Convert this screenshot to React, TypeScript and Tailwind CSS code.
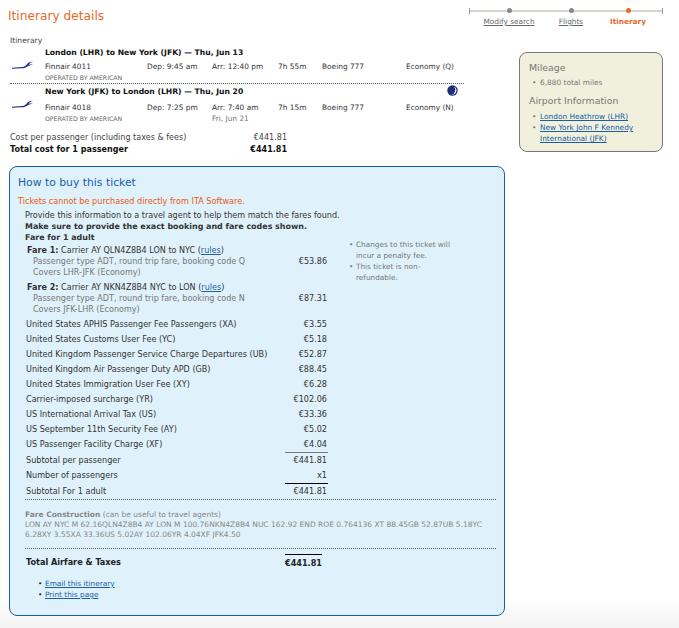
import React from "react";

const Plane = () => (
  <svg width="23" height="10" viewBox="0 0 24 10" className="block">
    <path d="M1 7.8 L12 7.2 C14 7 15 6.2 16.5 4.6 L18 2.6 L23 1.4 L19.4 3.4 L18.4 4.8 L23 4 L17.5 6.2 C15 7.8 13 8.4 11 8.5 L1 8.8 Z" fill="#1b2f7d" />
  </svg>
);

const Flight = ({ route, flight, dep, arr, arrNote, dur, cabin, badge, extra }: { route: string; flight: string; dep: string; arr: string; arrNote?: string; dur: string; cabin: string; badge?: boolean; extra?: boolean }) => (
  <div className="relative grid grid-cols-[35px_102px_65px_66px_44px_84px_1fr] text-[7.4px] leading-[11px] text-[#333]">
    <div className="row-span-3 col-start-1 pt-[13px] pl-[1px]"><Plane /></div>
    <div className="col-span-6 col-start-2 font-bold text-[7.65px] text-[#111] h-[14px]">{route}</div>
    <div className={extra ? "h-[13px] pt-[2px]" : "h-[11px]"}>{flight}</div>
    <div className={extra ? "h-[13px] pt-[2px]" : "h-[11px]"}>{dep}</div>
    <div className={extra ? "h-[13px] pt-[2px]" : "h-[11px]"}>{arr}</div>
    <div className={extra ? "h-[13px] pt-[2px]" : "h-[11px]"}>{dur}</div>
    <div className={extra ? "h-[13px] pt-[2px]" : "h-[11px]"}>Boeing 777</div>
    <div className={extra ? "h-[13px] pt-[2px]" : "h-[11px]"}>{cabin}</div>
    <div className="col-start-2 text-[6.2px] text-[#666] h-[11px]">OPERATED BY AMERICAN</div>
    <div className="col-start-4 col-span-2 text-[#777] h-[11px]">{arrNote}</div>
    {badge && (
      <svg width="11" height="11" viewBox="0 0 11 11" className="absolute right-[6px] -top-[1px]">
        <circle cx="5.5" cy="5.5" r="5.2" fill="#1b2f7d" />
        <path d="M7 1.6 A4.2 4.2 0 0 1 9.5 5.6 A4.2 4.2 0 0 1 4.6 9.6 A4.4 4.4 0 0 0 8 6.4 A4.6 4.6 0 0 0 7 1.6 Z" fill="#ffffff" />
      </svg>
    )}
  </div>
);

const Fee = ({ label, amount }: { label: string; amount: string }) => (
  <div className="flex h-[15px] items-center justify-between w-[301px] ml-[26px] text-[8.1px] whitespace-nowrap">
    <span>{label}</span>
    <span>{amount}</span>
  </div>
);

const fees = [
  ["United States APHIS Passenger Fee Passengers (XA)", "€3.55"],
  ["United States Customs User Fee (YC)", "€5.18"],
  ["United Kingdom Passenger Service Charge Departures (UB)", "€52.87"],
  ["United Kingdom Air Passenger Duty APD (GB)", "€88.45"],
  ["United States Immigration User Fee (XY)", "€6.28"],
  ["Carrier-imposed surcharge (YR)", "€102.06"],
  ["US International Arrival Tax (US)", "€33.36"],
  ["US September 11th Security Fee (AY)", "€5.02"],
  ["US Passenger Facility Charge (XF)", "€4.04"],
];

const Link = ({ children }: { children: React.ReactNode }) => (
  <a className="text-[#1a5ea8] underline">{children}</a>
);

const Step = ({ label, active, className }: { label: string; active?: boolean; className: string }) => (
  <div className={`absolute -top-[2px] flex flex-col items-center ${className}`}>
    <div className={`w-[5px] h-[5px] rounded-full ${active ? "bg-[#e8692e]" : "bg-[#888]"}`} />
    <span className={`mt-[4px] leading-[9px] whitespace-nowrap ${active ? "font-bold text-[#e8692e]" : "text-[#666] underline"}`}>{label}</span>
  </div>
);

const Fare = ({ n, text, amount, l1, l2, className }: { n: number; text: string; amount: string; l1: string; l2: string; className: string }) => (
  <div className={`ml-[26px] w-[301px] leading-[11px] ${className}`}>
    <div className="pl-[1px]"><b>Fare {n}:</b> {text} (<Link>rules</Link>)</div>
    <div className="flex justify-between text-[#777] pl-[7px]">
      <span>{l1}</span><span className="text-[#333]">{amount}</span>
    </div>
    <div className="text-[#777] pl-[7px]">{l2}</div>
  </div>
);

const dot = "relative before:content-['•'] before:absolute";

export default function App() {
  return (
    <div className="relative w-[679px] h-[628px] overflow-hidden bg-gradient-to-b from-white from-[95%] to-[#f3f3f3] font-['DejaVu_Sans',sans-serif] text-[8.05px] text-[#333]">
      <div className="flex justify-between items-start h-[34px]">
        <h1 className="text-[12.2px] leading-[17px] mt-[8px] ml-[8px] text-[#e8692e]">Itinerary details</h1>
        <div className="relative w-[194px] mt-[10px] mr-[16px] h-[2px] bg-[#d5d5cc] text-[7.35px]">
          <div className="absolute left-0 -top-[2px] w-px h-[6px] bg-[#999]" />
          <div className="absolute right-0 -top-[2px] w-px h-[6px] bg-[#999]" />
          <Step label="Modify search" className="left-[10px] w-[60px]" />
          <Step label="Flights" className="left-[82px] w-[40px]" />
          <Step label="Itinerary" active className="left-[134px] w-[50px]" />
        </div>
      </div>

      <div className="flex">
        <div className="w-[454px] ml-[10px]">
          <div className="leading-[11px] mt-[1px] h-[12px] text-[7.6px] text-[#444]">Itinerary</div>
          <Flight route="London (LHR) to New York (JFK) — Thu, Jun 13" flight="Finnair 4011" dep="Dep: 9:45 am" arr="Arr: 12:40 pm" dur="7h 55m" cabin="Economy (Q)" />
          <div className="border-b border-dotted border-[#555] mb-[2px]" />
          <Flight badge extra route="New York (JFK) to London (LHR) — Thu, Jun 20" flight="Finnair 4018" dep="Dep: 7:25 pm" arr="Arr: 7:40 am" arrNote="Fri, Jun 21" dur="7h 15m" cabin="Economy (N)" />
          <div className="flex mt-[7px] leading-[13px] w-[277px] justify-between text-[#444]"><span>Cost per passenger (including taxes &amp; fees)</span><span>€441.81</span></div>
          <div className="flex leading-[12px] w-[277px] justify-between font-bold text-[#111]"><span>Total cost for 1 passenger</span><span>€441.81</span></div>
        </div>
        <div className="w-[144px] h-[100px] ml-[55px] mt-[18px] rounded-[8px] border border-[#777] bg-[#f1f0dc] pl-[9px] pt-[8px] text-[#777] text-[7.4px]">
          <div className="text-[9.4px] leading-[13px]">Mileage</div>
          <ul className="mt-[3px] leading-[11px]"><li className={`${dot} pl-[11px] before:left-[3px]`}>6,880 total miles</li></ul>
          <div className="text-[9.4px] leading-[13px] mt-[6px]">Airport Information</div>
          <ul className="mt-[4px] leading-[11px]">
            <li className={`${dot} pl-[11px] before:left-[3px]`}><Link>London Heathrow (LHR)</Link></li>
            <li className={`${dot} pl-[11px] before:left-[3px]`}><Link>New York John F Kennedy International (JFK)</Link></li>
          </ul>
        </div>
      </div>

      <div className="ml-[9px] mt-[10px] w-[496px] h-[450px] rounded-[8px] border border-[#1a5ea8] bg-[#dff1fa] relative">
        <h2 className="text-[10.8px] leading-[14px] text-[#1a5ea8] mt-[9px] ml-[8px]">How to buy this ticket</h2>
        <p className="text-[#ea5a10] text-[8.14px] leading-[11px] ml-[8px] mt-[6px]">Tickets cannot be purchased directly from ITA Software.</p>
        <div className="ml-[15px] mt-[3px] leading-[11px]">
          <div>Provide this information to a travel agent to help them match the fares found.</div>
          <div className="font-bold text-[7.95px]">Make sure to provide the exact booking and fare codes shown.</div>
          <div className="font-bold text-[7.95px] mb-[2px]">Fare for 1 adult</div>
        </div>
        <div className="-ml-[10px]">
          <Fare n={1} className="mb-[4px]" text="Carrier AY QLN4Z8B4 LON to NYC" amount="€53.86" l1="Passenger type ADT, round trip fare, booking code Q" l2="Covers LHR-JFK (Economy)" />
          <Fare n={2} className="mb-[2px]" text="Carrier AY NKN4Z8B4 NYC to LON" amount="€87.31" l1="Passenger type ADT, round trip fare, booking code N" l2="Covers JFK-LHR (Economy)" />
          {fees.map(([l, a]) => <Fee key={l} label={l} amount={a} />)}
        </div>
        <div className="ml-[275px] w-[43px] border-t border-[#777]" />
        <div className="-ml-[10px]">
          <Fee label="Subtotal per passenger" amount="€441.81" />
          <Fee label="Number of passengers" amount="x1" />
        </div>
        <div className="ml-[275px] w-[43px] border-t border-black" />
        <div className="-ml-[10px]"><Fee label="Subtotal For 1 adult" amount="€441.81" /></div>
        <div className="ml-[15px] w-[471px] border-t border-dotted border-[#555]" />
        <div className="ml-[15px] mt-[10px] w-[466px] text-[7.5px] leading-[10px] text-[#888]">
          <div><b>Fare Construction</b> (can be useful to travel agents)</div>
          <div>LON AY NYC M 62.16QLN4Z8B4 AY LON M 100.76NKN4Z8B4 NUC 162.92 END ROE 0.764136 XT 88.45GB 52.87UB 5.18YC 6.28XY 3.55XA 33.36US 5.02AY 102.06YR 4.04XF JFK4.50</div>
        </div>
        <div className="ml-[15px] w-[471px] border-t border-dotted border-[#555] mt-[8px]" />
        <div className="flex ml-[16px] mt-[5px] font-bold text-[#222] leading-[11px] text-[8.14px]">
          <span className="w-[259px] pt-[3px]">Total Airfare &amp; Taxes</span>
          <span className="w-[37px] border-t border-black pt-[3px] box-content whitespace-nowrap">€441.81</span>
        </div>
        <ul className="ml-[35px] mt-[9px] text-[7.37px] leading-[11px]">
          <li className={`${dot} before:-left-[7px] before:text-[#222]`}><Link>Email this itinerary</Link></li>
          <li className={`${dot} before:-left-[7px] before:text-[#222]`}><Link>Print this page</Link></li>
        </ul>
        <ul className="absolute left-[339px] top-[72px] w-[112px] text-[7.3px] leading-[11px] text-[#777]">
          <li className={`${dot} pl-[7px] before:left-0`}>Changes to this ticket will incur a penalty fee.</li>
          <li className={`${dot} pl-[7px] before:left-0`}>This ticket is non-refundable.</li>
        </ul>
      </div>
    </div>
  );
}
